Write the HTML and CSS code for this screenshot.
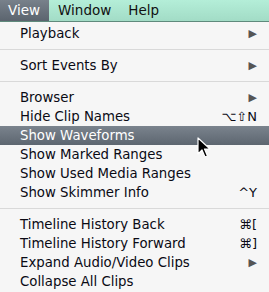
FILE: index.html
```html
<!DOCTYPE html>
<html lang="en">
  <head>
    <meta charset="UTF-8" />
    <title>View menu</title>
    <link rel="stylesheet" href="styles.css">
  </head>
  <body>
    <div class="menubar">
      <span class="menubar-item active">View</span>
      <span class="menubar-item">Window</span>
      <span class="menubar-item">Help</span>
    </div>
    <div class="menu">
      <div class="menu-item"><span>Playback</span><span class="arrow">&#9654;</span></div>
      <div class="menu-sep"></div>
      <div class="menu-item"><span>Sort Events By</span><span class="arrow">&#9654;</span></div>
      <div class="menu-sep"></div>
      <div class="menu-item"><span>Browser</span><span class="arrow">&#9654;</span></div>
      <div class="menu-item"><span>Hide Clip Names</span><span class="key">&#8997;&#8679;N</span></div>
      <div class="menu-item selected"><span>Show Waveforms</span></div>
      <div class="menu-item"><span>Show Marked Ranges</span></div>
      <div class="menu-item"><span>Show Used Media Ranges</span></div>
      <div class="menu-item"><span>Show Skimmer Info</span><span class="key">^Y</span></div>
      <div class="menu-sep"></div>
      <div class="menu-item"><span>Timeline History Back</span><span class="key">&#8984;[</span></div>
      <div class="menu-item"><span>Timeline History Forward</span><span class="key">&#8984;]</span></div>
      <div class="menu-item"><span>Expand Audio/Video Clips</span><span class="arrow">&#9654;</span></div>
      <div class="menu-item"><span>Collapse All Clips</span></div>
    </div>
    <svg class="cursor" width="14" height="22" viewBox="0 0 14 22">
      <path d="M1 1 L1 17 L5 13 L8 20 L10.5 19 L7.5 12 L13 12 Z" fill="#000" stroke="#fff" stroke-width="1.2" stroke-linejoin="round"/>
    </svg>
  </body>
</html>
```

FILE: styles.css
```css
* {
  margin: 0;
  padding: 0;
}

body {
  width: 269px;
  height: 292px;
  overflow: hidden;
  position: relative;
  background: #f6f6f6;
  font-family: "DejaVu Sans", sans-serif;
  font-size: 13.3px;
  color: #0a0a14;
}

.menubar {
  height: 21px;
  display: flex;
  align-items: center;
  background: linear-gradient(to bottom, #b4eed8, #a2dcc6);
  border-bottom: 1px solid #5f8a7c;
}

.menubar-item {
  height: 21px;
  line-height: 21px;
  padding: 0 8px;
  margin-right: 1px;
  font-size: 13.5px;
  color: #111;
}

.menubar-item.active {
  color: #fff;
  padding: 0 9px 0 8px;
  background: linear-gradient(to bottom, #78818b, #5b646e);
}

.menu {
  padding-top: 2px;
}

.menu-item {
  height: 19px;
  line-height: 19px;
  display: flex;
  justify-content: space-between;
  align-items: center;
  padding: 0 12px 0 20px;
}

.menu-item.selected {
  color: #fff;
  background: linear-gradient(to bottom, #7a838d, #5d6670);
}

.menu-sep {
  height: 13px;
  display: flex;
  align-items: center;
}

.menu-sep::after {
  content: "";
  flex: 1;
  height: 1px;
  background: #d9d9d9;
}

.arrow {
  font-size: 11px;
  color: #555;
}

.key {
  font-size: 13px;
}

.cursor {
  position: absolute;
  left: 197px;
  top: 137px;
}
```
